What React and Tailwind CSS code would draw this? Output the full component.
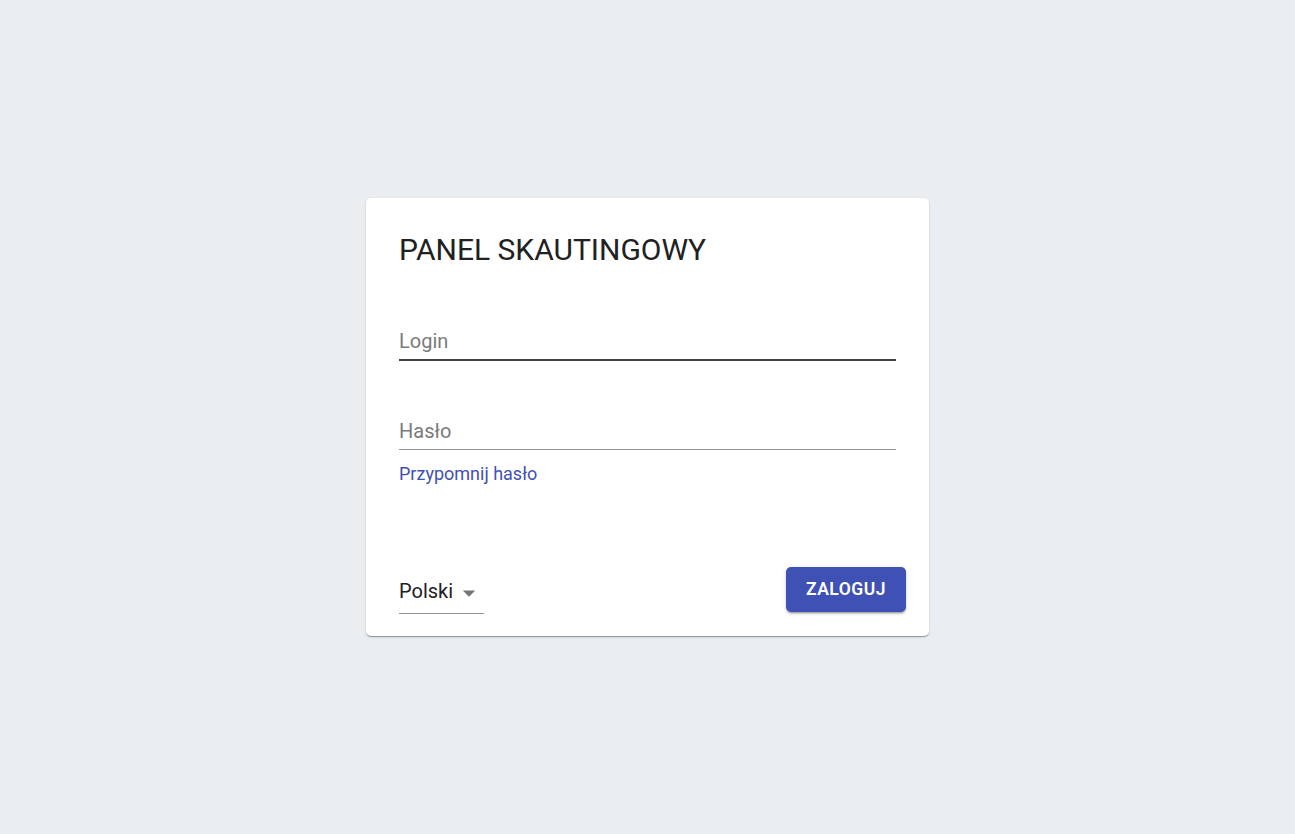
export default function App() {
  return (
    <div className="min-h-screen w-full bg-[#eaeef1] flex items-center justify-center font-['Roboto',sans-serif]">
      <div className="w-[563px] h-[438px] bg-white rounded-[5px] flex flex-col shadow-[0_2px_1px_-1px_rgba(0,0,0,0.2),0_1px_1px_0_rgba(0,0,0,0.14),0_1px_3px_0_rgba(0,0,0,0.12)]">
        {/* Header + fields */}
        <div className="px-[33px] pt-[32px]">
          <h1 className="text-[30px] leading-[40px] font-normal text-[#212121]">PANEL SKAUTINGOWY</h1>

          <div className="mt-[59px] pb-[6px] border-b-2 border-[#424242]">
            <input
              type="text"
              placeholder="Login"
              className="w-full block text-[20px] leading-[24px] h-[24px] text-[#212121] placeholder-[#7a7a7a] outline-none bg-transparent"
            />
          </div>

          <div className="mt-[58px] pb-[6px] border-b border-[#949494]">
            <input
              type="password"
              placeholder="Hasło"
              className="w-full block text-[20px] leading-[24px] h-[24px] text-[#212121] placeholder-[#7a7a7a] outline-none bg-transparent"
            />
          </div>

          <a href="#" className="block mt-[14px] text-[18px] leading-[20px] text-[#3f51b5]">
            Przypomnij hasło
          </a>
        </div>

        {/* Footer */}
        <div className="mt-auto flex items-end justify-between pl-[33px] pr-[23px] pb-[23px]">
          <div className="w-[85px] -mb-[1px] flex items-center pb-[10px] border-b border-[#949494]">
            <span className="text-[20px] leading-[24px] text-[#212121]">Polski</span>
            <svg viewBox="0 0 24 24" className="ml-auto w-[30px] h-[30px] -mt-[1px] -mb-[5px] text-[#757575]" fill="currentColor">
              <path d="M7 10l5 5 5-5z" />
            </svg>
          </div>
          <button
            type="button"
            className="mb-[1px] w-[120px] h-[45px] rounded-[5px] bg-[#3f51b5] text-white text-[17.5px] font-semibold tracking-[0.5px] uppercase shadow-[0_3px_1px_-2px_rgba(0,0,0,0.2),0_2px_2px_0_rgba(0,0,0,0.14),0_1px_5px_0_rgba(0,0,0,0.12)]"
          >
            Zaloguj
          </button>
        </div>
      </div>
    </div>
  );
}
